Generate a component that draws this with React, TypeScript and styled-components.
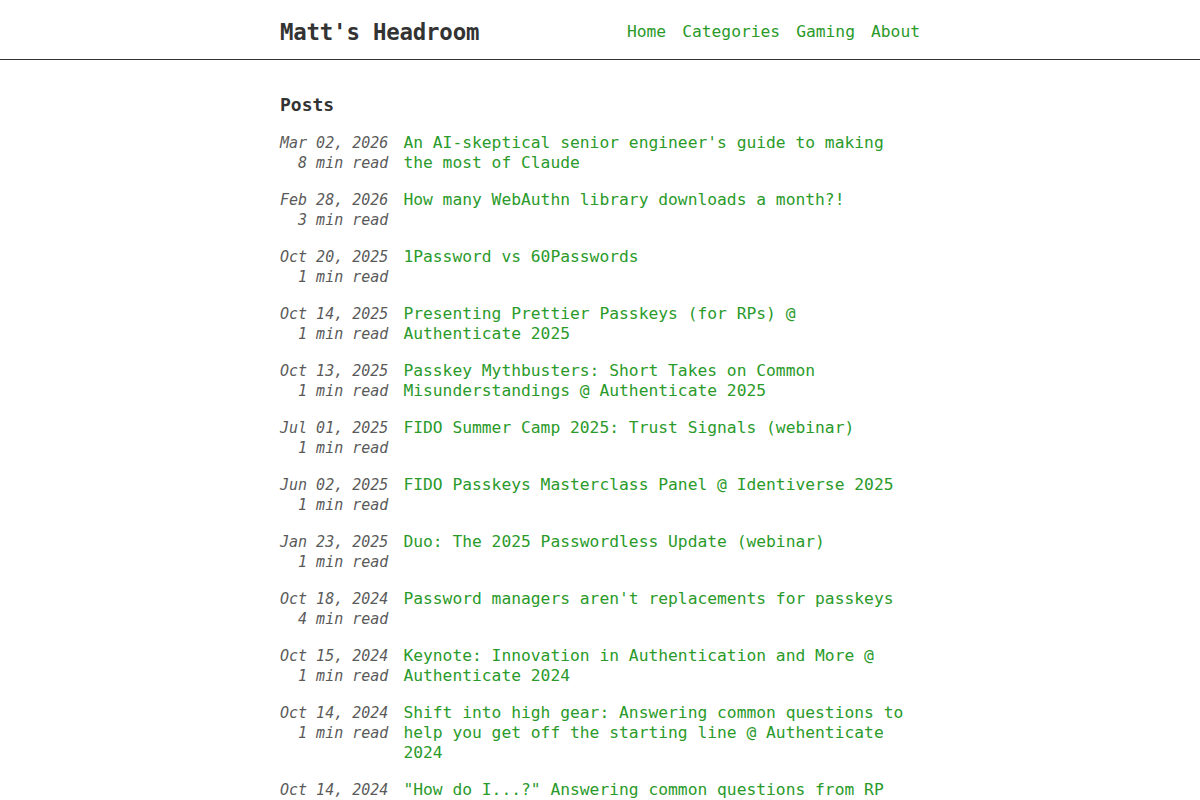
import React from "react";
import styled, { createGlobalStyle } from "styled-components";

type Post = {
  date: string;
  read: number;
  title: string;
};

const posts: Post[] = [
  { date: "Mar 02, 2026", read: 8, title: "An AI-skeptical senior engineer's guide to making the most of Claude" },
  { date: "Feb 28, 2026", read: 3, title: "How many WebAuthn library downloads a month?!" },
  { date: "Oct 20, 2025", read: 1, title: "1Password vs 60Passwords" },
  { date: "Oct 14, 2025", read: 1, title: "Presenting Prettier Passkeys (for RPs) @ Authenticate 2025" },
  { date: "Oct 13, 2025", read: 1, title: "Passkey Mythbusters: Short Takes on Common Misunderstandings @ Authenticate 2025" },
  { date: "Jul 01, 2025", read: 1, title: "FIDO Summer Camp 2025: Trust Signals (webinar)" },
  { date: "Jun 02, 2025", read: 1, title: "FIDO Passkeys Masterclass Panel @ Identiverse 2025" },
  { date: "Jan 23, 2025", read: 1, title: "Duo: The 2025 Passwordless Update (webinar)" },
  { date: "Oct 18, 2024", read: 4, title: "Password managers aren't replacements for passkeys" },
  { date: "Oct 15, 2024", read: 1, title: "Keynote: Innovation in Authentication and More @ Authenticate 2024" },
  { date: "Oct 14, 2024", read: 1, title: "Shift into high gear: Answering common questions to help you get off the starting line @ Authenticate 2024" },
  { date: "Oct 14, 2024", read: 1, title: "\"How do I...?\" Answering common questions from RP developers @ Authenticate 2024" },
  { date: "Sep 12, 2024", read: 2, title: "Passkeys and the road ahead" },
];

const GlobalStyle = createGlobalStyle`
  html, body {
    margin: 0;
    padding: 0;
    background: #fff;
  }
  body {
    font-family: "DejaVu Sans Mono", "Liberation Mono", monospace;
    color: #333;
  }
`;

const Header = styled.header`
  border-bottom: 1px solid #333;
`;

const HeaderInner = styled.div`
  max-width: 640px;
  height: 59px;
  box-sizing: border-box;
  padding-top: 4px;
  margin: 0 auto;
  display: flex;
  align-items: center;
  justify-content: space-between;
`;

const SiteTitle = styled.a`
  font-size: 22.4px;
  font-weight: 700;
  color: #333;
  text-decoration: none;
  letter-spacing: -0.2px;
`;

const Nav = styled.nav`
  display: flex;
  gap: 16px;
`;

const NavLink = styled.a`
  font-size: 16.3px;
  color: #2a9a2a;
  text-decoration: none;
`;

const Main = styled.main`
  max-width: 640px;
  margin: 0 auto;
  padding-top: 34px;
`;

const Heading = styled.h2`
  font-size: 18px;
  font-weight: 700;
  margin: 0 0 18px;
  color: #333;
`;

const List = styled.ul`
  list-style: none;
  margin: 0;
  padding: 0;
  display: flex;
  flex-direction: column;
  gap: 17px;
`;

const Row = styled.li`
  display: flex;
  gap: 15px;
`;

const Meta = styled.div`
  flex: 0 0 108px;
  text-align: right;
  font-size: 15px;
  font-style: italic;
  line-height: 20px;
  color: #5a5a5a;
  white-space: nowrap;
`;

const PostLink = styled.a`
  flex: 1;
  font-size: 16.3px;
  line-height: 20px;
  color: #2a9a2a;
  text-decoration: none;
`;

export default function App() {
  return (
    <>
      <GlobalStyle />
      <Header>
        <HeaderInner>
          <SiteTitle href="#">Matt's Headroom</SiteTitle>
          <Nav>
            <NavLink href="#">Home</NavLink>
            <NavLink href="#">Categories</NavLink>
            <NavLink href="#">Gaming</NavLink>
            <NavLink href="#">About</NavLink>
          </Nav>
        </HeaderInner>
      </Header>
      <Main>
        <Heading>Posts</Heading>
        <List>
          {posts.map((p, i) => (
            <Row key={i}>
              <Meta>
                <div>{p.date}</div>
                <div>{p.read} min read</div>
              </Meta>
              <PostLink href="#">{p.title}</PostLink>
            </Row>
          ))}
        </List>
      </Main>
    </>
  );
}
